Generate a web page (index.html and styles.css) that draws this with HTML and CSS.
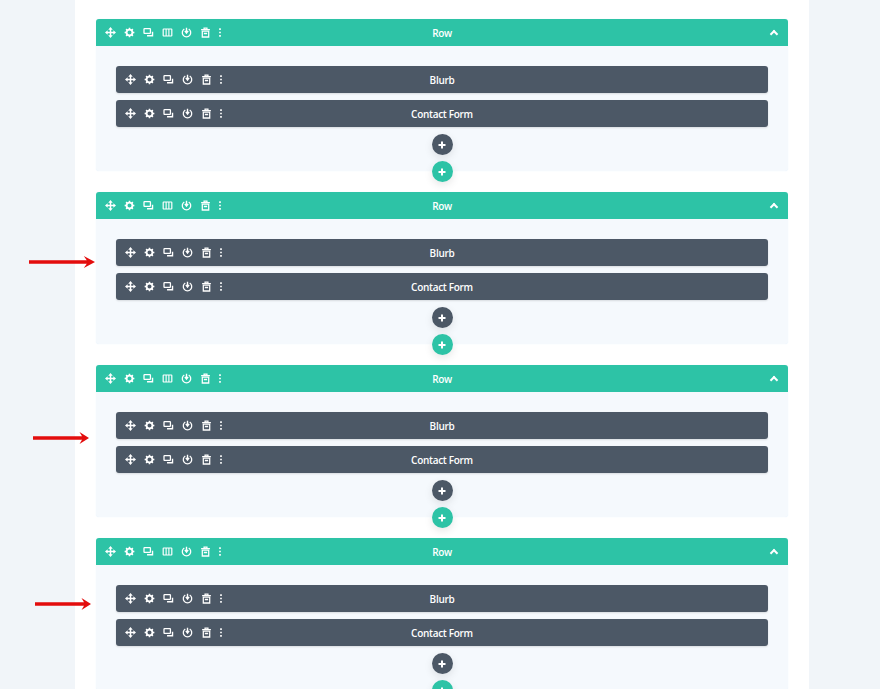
FILE: index.html
```html
<!DOCTYPE html>
<html lang="en">
<head>
    <meta charset="UTF-8">
    <meta name="viewport" content="width=device-width, initial-scale=1.0">
    <title>Row Layout</title>
    <link rel="stylesheet" href="styles.css">
</head>
<body>
    <!-- Shared toolbar icons -->
    <svg class="icon-defs" width="0" height="0">
        <symbol id="i-move" viewBox="0 0 12 12">
            <path d="M6 0 8.5 2.9H6.8V5.2H9.1V3.5L12 6 9.1 8.5V6.8H6.8V9.1H8.5L6 12 3.5 9.1H5.2V6.8H2.9V8.5L0 6 2.9 3.5V5.2H5.2V2.9H3.5Z" fill="currentColor"/>
        </symbol>
        <symbol id="i-gear" viewBox="0 0 12 12">
            <circle cx="6" cy="6" r="3.2" fill="none" stroke="currentColor" stroke-width="2"/>
            <path d="M6 .7V2.5M6 9.5v1.8M.7 6h1.8M9.5 6h1.8M2.3 2.3 3.5 3.5M8.5 8.5 9.7 9.7M2.3 9.7 3.5 8.5M8.5 3.5 9.7 2.3" stroke="currentColor" stroke-width="1.7"/>
        </symbol>
        <symbol id="i-copy" viewBox="0 0 12 12">
            <rect x="1.1" y="1.8" width="7" height="5.2" rx=".6" fill="none" stroke="currentColor" stroke-width="1.4"/>
            <path d="M10.4 5.2V9.6H4.4" fill="none" stroke="currentColor" stroke-width="1.5"/>
        </symbol>
        <symbol id="i-cols" viewBox="0 0 12 12">
            <rect x="1.3" y="2.2" width="9.4" height="7.6" rx=".6" fill="none" stroke="currentColor" stroke-width="1.3"/>
            <path d="M4.5 2.2V9.8M7.5 2.2V9.8" stroke="currentColor" stroke-width="1.2"/>
        </symbol>
        <symbol id="i-power" viewBox="0 0 12 12">
            <path d="M3.6 2.2A4.6 4.6 0 1 0 8.4 2.2" fill="none" stroke="currentColor" stroke-width="1.4"/>
            <path d="M6 .8V5.4M4.2 4.2 6 6.6 7.8 4.2" fill="none" stroke="currentColor" stroke-width="1.5"/>
        </symbol>
        <symbol id="i-trash" viewBox="0 0 12 12">
            <path d="M1.2 2.9H10.8M4.4 2.8V1.3H7.6V2.8" fill="none" stroke="currentColor" stroke-width="1.3"/>
            <path d="M2.5 4.6H9.5V10.9H2.5ZM4.2 7.1H7.8" fill="none" stroke="currentColor" stroke-width="1.4"/>
        </symbol>
        <symbol id="i-dots" viewBox="0 0 4 12">
            <path d="M1.1 1.4H2.9V3.2H1.1ZM1.1 5.1H2.9V6.9H1.1ZM1.1 8.8H2.9V10.6H1.1Z" fill="currentColor"/>
        </symbol>
        <symbol id="i-arrow" viewBox="0 0 56 12" preserveAspectRatio="none">
            <path d="M0 4.3H49L46.5 0 56 6 46.5 12 49 7.7H0Z" fill="#e30d0d"/>
        </symbol>
    </svg>

    <main class="section">
        <div class="row">
            <div class="bar bar-row">
                <div class="tools">
                    <svg class="icon"><use href="#i-move"/></svg>
                    <svg class="icon"><use href="#i-gear"/></svg>
                    <svg class="icon"><use href="#i-copy"/></svg>
                    <svg class="icon"><use href="#i-cols"/></svg>
                    <svg class="icon"><use href="#i-power"/></svg>
                    <svg class="icon"><use href="#i-trash"/></svg>
                    <svg class="dots"><use href="#i-dots"/></svg>
                </div>
                <span class="bar-title">Row</span>
                <span class="chevron"></span>
            </div>
            <div class="row-body">
                <div class="bar bar-module">
                    <div class="tools">
                        <svg class="icon"><use href="#i-move"/></svg>
                        <svg class="icon"><use href="#i-gear"/></svg>
                        <svg class="icon"><use href="#i-copy"/></svg>
                        <svg class="icon"><use href="#i-power"/></svg>
                        <svg class="icon"><use href="#i-trash"/></svg>
                        <svg class="dots"><use href="#i-dots"/></svg>
                    </div>
                    <span class="bar-title">Blurb</span>
                </div>
                <div class="bar bar-module">
                    <div class="tools">
                        <svg class="icon"><use href="#i-move"/></svg>
                        <svg class="icon"><use href="#i-gear"/></svg>
                        <svg class="icon"><use href="#i-copy"/></svg>
                        <svg class="icon"><use href="#i-power"/></svg>
                        <svg class="icon"><use href="#i-trash"/></svg>
                        <svg class="dots"><use href="#i-dots"/></svg>
                    </div>
                    <span class="bar-title">Contact Form</span>
                </div>
                <span class="add add-dark"></span>
            </div>
            <span class="add add-green"></span>
        </div>

        <div class="row">
            <div class="bar bar-row">
                <div class="tools">
                    <svg class="icon"><use href="#i-move"/></svg>
                    <svg class="icon"><use href="#i-gear"/></svg>
                    <svg class="icon"><use href="#i-copy"/></svg>
                    <svg class="icon"><use href="#i-cols"/></svg>
                    <svg class="icon"><use href="#i-power"/></svg>
                    <svg class="icon"><use href="#i-trash"/></svg>
                    <svg class="dots"><use href="#i-dots"/></svg>
                </div>
                <span class="bar-title">Row</span>
                <span class="chevron"></span>
            </div>
            <div class="row-body">
                <div class="bar bar-module">
                    <div class="tools">
                        <svg class="icon"><use href="#i-move"/></svg>
                        <svg class="icon"><use href="#i-gear"/></svg>
                        <svg class="icon"><use href="#i-copy"/></svg>
                        <svg class="icon"><use href="#i-power"/></svg>
                        <svg class="icon"><use href="#i-trash"/></svg>
                        <svg class="dots"><use href="#i-dots"/></svg>
                    </div>
                    <span class="bar-title">Blurb</span>
                </div>
                <div class="bar bar-module">
                    <div class="tools">
                        <svg class="icon"><use href="#i-move"/></svg>
                        <svg class="icon"><use href="#i-gear"/></svg>
                        <svg class="icon"><use href="#i-copy"/></svg>
                        <svg class="icon"><use href="#i-power"/></svg>
                        <svg class="icon"><use href="#i-trash"/></svg>
                        <svg class="dots"><use href="#i-dots"/></svg>
                    </div>
                    <span class="bar-title">Contact Form</span>
                </div>
                <span class="add add-dark"></span>
            </div>
            <span class="add add-green"></span>
        </div>

        <div class="row">
            <div class="bar bar-row">
                <div class="tools">
                    <svg class="icon"><use href="#i-move"/></svg>
                    <svg class="icon"><use href="#i-gear"/></svg>
                    <svg class="icon"><use href="#i-copy"/></svg>
                    <svg class="icon"><use href="#i-cols"/></svg>
                    <svg class="icon"><use href="#i-power"/></svg>
                    <svg class="icon"><use href="#i-trash"/></svg>
                    <svg class="dots"><use href="#i-dots"/></svg>
                </div>
                <span class="bar-title">Row</span>
                <span class="chevron"></span>
            </div>
            <div class="row-body">
                <div class="bar bar-module">
                    <div class="tools">
                        <svg class="icon"><use href="#i-move"/></svg>
                        <svg class="icon"><use href="#i-gear"/></svg>
                        <svg class="icon"><use href="#i-copy"/></svg>
                        <svg class="icon"><use href="#i-power"/></svg>
                        <svg class="icon"><use href="#i-trash"/></svg>
                        <svg class="dots"><use href="#i-dots"/></svg>
                    </div>
                    <span class="bar-title">Blurb</span>
                </div>
                <div class="bar bar-module">
                    <div class="tools">
                        <svg class="icon"><use href="#i-move"/></svg>
                        <svg class="icon"><use href="#i-gear"/></svg>
                        <svg class="icon"><use href="#i-copy"/></svg>
                        <svg class="icon"><use href="#i-power"/></svg>
                        <svg class="icon"><use href="#i-trash"/></svg>
                        <svg class="dots"><use href="#i-dots"/></svg>
                    </div>
                    <span class="bar-title">Contact Form</span>
                </div>
                <span class="add add-dark"></span>
            </div>
            <span class="add add-green"></span>
        </div>

        <div class="row">
            <div class="bar bar-row">
                <div class="tools">
                    <svg class="icon"><use href="#i-move"/></svg>
                    <svg class="icon"><use href="#i-gear"/></svg>
                    <svg class="icon"><use href="#i-copy"/></svg>
                    <svg class="icon"><use href="#i-cols"/></svg>
                    <svg class="icon"><use href="#i-power"/></svg>
                    <svg class="icon"><use href="#i-trash"/></svg>
                    <svg class="dots"><use href="#i-dots"/></svg>
                </div>
                <span class="bar-title">Row</span>
                <span class="chevron"></span>
            </div>
            <div class="row-body">
                <div class="bar bar-module">
                    <div class="tools">
                        <svg class="icon"><use href="#i-move"/></svg>
                        <svg class="icon"><use href="#i-gear"/></svg>
                        <svg class="icon"><use href="#i-copy"/></svg>
                        <svg class="icon"><use href="#i-power"/></svg>
                        <svg class="icon"><use href="#i-trash"/></svg>
                        <svg class="dots"><use href="#i-dots"/></svg>
                    </div>
                    <span class="bar-title">Blurb</span>
                </div>
                <div class="bar bar-module">
                    <div class="tools">
                        <svg class="icon"><use href="#i-move"/></svg>
                        <svg class="icon"><use href="#i-gear"/></svg>
                        <svg class="icon"><use href="#i-copy"/></svg>
                        <svg class="icon"><use href="#i-power"/></svg>
                        <svg class="icon"><use href="#i-trash"/></svg>
                        <svg class="dots"><use href="#i-dots"/></svg>
                    </div>
                    <span class="bar-title">Contact Form</span>
                </div>
                <span class="add add-dark"></span>
            </div>
            <span class="add add-green"></span>
        </div>
    </main>

    <!-- Red annotation arrows -->
    <svg class="arrow arrow-1"><use href="#i-arrow"/></svg>
    <svg class="arrow arrow-2"><use href="#i-arrow"/></svg>
    <svg class="arrow arrow-3"><use href="#i-arrow"/></svg>
</body>
</html>
```

FILE: styles.css
```css
:root {
    --page-bg: #f1f5f9;
    --row-bg: #f5f9fd;
    --green: #2dc3a6;
    --slate: #4c5866;
}

html {
    height: 100%;
    overflow: hidden;
}

body {
    margin: 0;
    height: 100%;
    overflow: hidden;
    position: relative;
    background-color: var(--page-bg);
    font-family: 'Open Sans', 'Liberation Sans', sans-serif;
}

.icon-defs {
    position: absolute;
}

.section {
    width: 692px;
    min-height: 100%;
    margin-left: 75px;
    padding: 19px 21px 0;
    display: flex;
    flex-direction: column;
    gap: 21px;
    background-color: #ffffff;
}

.row {
    position: relative;
    flex-shrink: 0;
    height: 152px;
    display: flex;
    flex-direction: column;
    background-color: var(--row-bg);
    border-radius: 3px;
    box-shadow: 0 0 1px rgba(43, 135, 218, 0.15);
}

.row-body {
    display: flex;
    flex-direction: column;
    gap: 7px;
    padding: 20px 20px 0;
}

/* Toolbars */
.bar {
    display: grid;
    grid-template-columns: 1fr auto 1fr;
    align-items: center;
    height: 27px;
    color: #ffffff;
    font-size: 10px;
    font-weight: 600;
    letter-spacing: -0.3px;
}

.bar-row {
    background-color: var(--green);
    border-radius: 3px 3px 0 0;
    flex-shrink: 0;
}

.bar-module {
    background-color: var(--slate);
    border-radius: 3px;
    box-shadow: 0 1px 2px rgba(0, 0, 0, 0.12);
}

.tools {
    display: flex;
    align-items: center;
    padding-left: 9px;
}

.icon {
    width: 11px;
    height: 11px;
    margin-right: 8px;
    flex-shrink: 0;
}

.dots {
    width: 4px;
    height: 11px;
    margin-left: -1px;
    flex-shrink: 0;
}

.chevron {
    justify-self: end;
    width: 4px;
    height: 4px;
    margin: 3px 11px 0 0;
    border-top: 2px solid #ffffff;
    border-left: 2px solid #ffffff;
    transform: rotate(45deg);
}

/* Round plus buttons */
.add {
    position: relative;
    display: block;
    width: 21px;
    height: 21px;
    border-radius: 50%;
    box-shadow: 0 3px 8px rgba(0, 0, 0, 0.1);
}

.add::before,
.add::after {
    content: '';
    position: absolute;
    left: 50%;
    top: 50%;
    background-color: #ffffff;
    transform: translate(-50%, -50%);
}

.add::before {
    width: 7px;
    height: 2px;
}

.add::after {
    width: 2px;
    height: 7px;
}

.add-dark {
    align-self: center;
    background-color: var(--slate);
}

.add-green {
    position: absolute;
    left: 50%;
    bottom: -11px;
    margin-left: -10.5px;
    z-index: 1;
    background-color: var(--green);
}

/* Annotations */
.arrow {
    position: absolute;
    width: 56px;
    height: 12px;
}

.arrow-1 {
    left: 29px;
    top: 256px;
    width: 66px;
}

.arrow-2 {
    left: 33px;
    top: 432px;
}

.arrow-3 {
    left: 35px;
    top: 598px;
}
```
